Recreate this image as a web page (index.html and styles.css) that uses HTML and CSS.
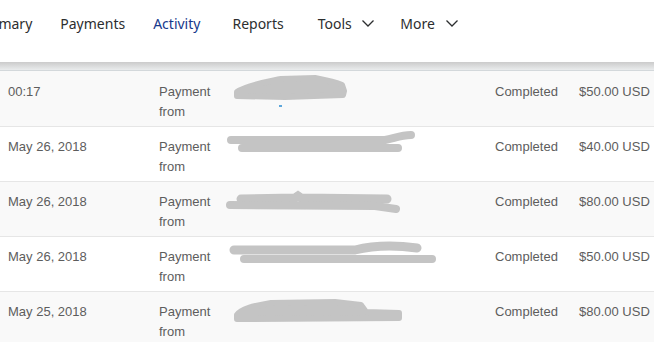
FILE: index.html
```html
<!DOCTYPE html>
<html>

<head>
    <meta charset="UTF-8">
    <title>Activity</title>
    <link rel="stylesheet" href="styles.css">
</head>

<body>
    <div class="topbar">
        <ul class="nav">
            <li>Summary</li>
            <li>Payments</li>
            <li class="active">Activity</li>
            <li class="reports">Reports</li>
            <li class="drop tools">Tools
                <svg width="12" height="7" viewBox="0 0 12 7"><path d="M0.5 0.5 L6 6 L11.5 0.5" fill="none" stroke="#2c2e2f" stroke-width="1.3"/></svg>
            </li>
            <li class="drop">More
                <svg width="12" height="7" viewBox="0 0 12 7"><path d="M0.5 0.5 L6 6 L11.5 0.5" fill="none" stroke="#2c2e2f" stroke-width="1.3"/></svg>
            </li>
        </ul>
    </div>
    <div class="shade"></div>

    <div class="list">
        <div class="row">
            <div class="date">00:17</div>
            <div class="type">Payment from</div>
            <div class="name">
                <svg width="270" height="55" viewBox="0 0 270 55">
                    <path d="M54 34 L57 34" stroke="#2a8bd0" stroke-width="1.5"/>
                    <path d="M12 20 C 22 13, 42 10, 56 7 L 90 6 C 100 8, 110 10, 117 13 L 119 19 L 118 23 L 60 25 L 12 24 Z" fill="#c4c4c4" stroke="#c4c4c4" stroke-width="6" stroke-linejoin="round"/>
                </svg>
            </div>
            <div class="status">Completed</div>
            <div class="amount">$50.00 USD</div>
        </div>
        <div class="row">
            <div class="date">May 26, 2018</div>
            <div class="type">Payment from</div>
            <div class="name">
                <svg width="270" height="55" viewBox="0 0 270 55">
                    <path d="M6 13 L 160 13 C 170 11, 176 8, 186 8" fill="none" stroke="#c4c4c4" stroke-width="8" stroke-linecap="round"/>
                    <path d="M17 21 L 173 21" fill="none" stroke="#c4c4c4" stroke-width="8" stroke-linecap="round"/>
                </svg>
            </div>
            <div class="status">Completed</div>
            <div class="amount">$40.00 USD</div>
        </div>
        <div class="row">
            <div class="date">May 26, 2018</div>
            <div class="type">Payment from</div>
            <div class="name">
                <svg width="270" height="55" viewBox="0 0 270 55">
                    <path d="M16 17 L 70 16 L 73 14 L 76 16 L 162 17" fill="none" stroke="#c4c4c4" stroke-width="9" stroke-linecap="round"/>
                    <path d="M5 23 L 150 24 L 171 27" fill="none" stroke="#c4c4c4" stroke-width="8" stroke-linecap="round" stroke-linejoin="round"/>
                </svg>
            </div>
            <div class="status">Completed</div>
            <div class="amount">$80.00 USD</div>
        </div>
        <div class="row">
            <div class="date">May 26, 2018</div>
            <div class="type">Payment from</div>
            <div class="name">
                <svg width="270" height="55" viewBox="0 0 270 55">
                    <path d="M9 13 L 130 13 C 150 8, 170 8, 192 11" fill="none" stroke="#c4c4c4" stroke-width="9" stroke-linecap="round"/>
                    <path d="M19 22 L 207 22" fill="none" stroke="#c4c4c4" stroke-width="8" stroke-linecap="round"/>
                </svg>
            </div>
            <div class="status">Completed</div>
            <div class="amount">$50.00 USD</div>
        </div>
        <div class="row">
            <div class="date">May 25, 2018</div>
            <div class="type">Payment from</div>
            <div class="name">
                <svg width="270" height="55" viewBox="0 0 270 55">
                    <path d="M12 23 C 16 17, 28 14, 46 11 L 110 10 L 136 13 L 141 20 L 174 21 L 174 26 L 12 27 Z" fill="#c4c4c4" stroke="#c4c4c4" stroke-width="6" stroke-linejoin="round"/>
                </svg>
            </div>
            <div class="status">Completed</div>
            <div class="amount">$80.00 USD</div>
        </div>
    </div>
</body>

</html>
```

FILE: styles.css
```css
* {
    margin: 0;
    padding: 0;
}

body,
html {
    height: 100%;
    overflow: hidden;
    background: #fff;
}

.topbar {
    height: 62px;
    background: #fff;
    overflow: hidden;
}

.nav {
    list-style: none;
    display: flex;
    align-items: center;
    height: 46px;
    margin-left: -31px;
    font-family: "Noto Sans", "Open Sans", sans-serif;
    font-size: 14px;
    color: #2c2e2f;
}

.nav li {
    margin-right: 28px;
    white-space: nowrap;
}

.nav li.active {
    color: #17398c;
    margin-right: 32px;
}

.nav li.reports {
    margin-right: 34px;
}

.nav li.tools {
    margin-right: 26px;
}

.nav li.drop svg {
    margin-left: 7px;
    vertical-align: 2px;
}

.shade {
    height: 8px;
    background: linear-gradient(#cbcbcb, #eaeced);
    border-bottom: 1px solid #d3d8db;
}

.list {
    padding-top: 1px;
    background: #f9f9f9;
    font-family: "Liberation Sans", Arial, sans-serif;
    font-size: 13px;
    color: #5d5d5d;
}

.row {
    display: grid;
    grid-template-columns: 159px 66px 270px 84px 1fr;
    height: 55px;
    border-bottom: 1px solid #e6e6e6;
    box-sizing: border-box;
}

.row:nth-child(odd) {
    background: #f9f9f9;
}

.row:nth-child(even) {
    background: #fff;
}

.row>div {
    padding-top: 10px;
    line-height: 20px;
}

.row .date {
    padding-left: 8px;
}

.row .name {
    padding-top: 0;
}

.row .name svg {
    display: block;
}

.row .amount {
    white-space: nowrap;
}
```
